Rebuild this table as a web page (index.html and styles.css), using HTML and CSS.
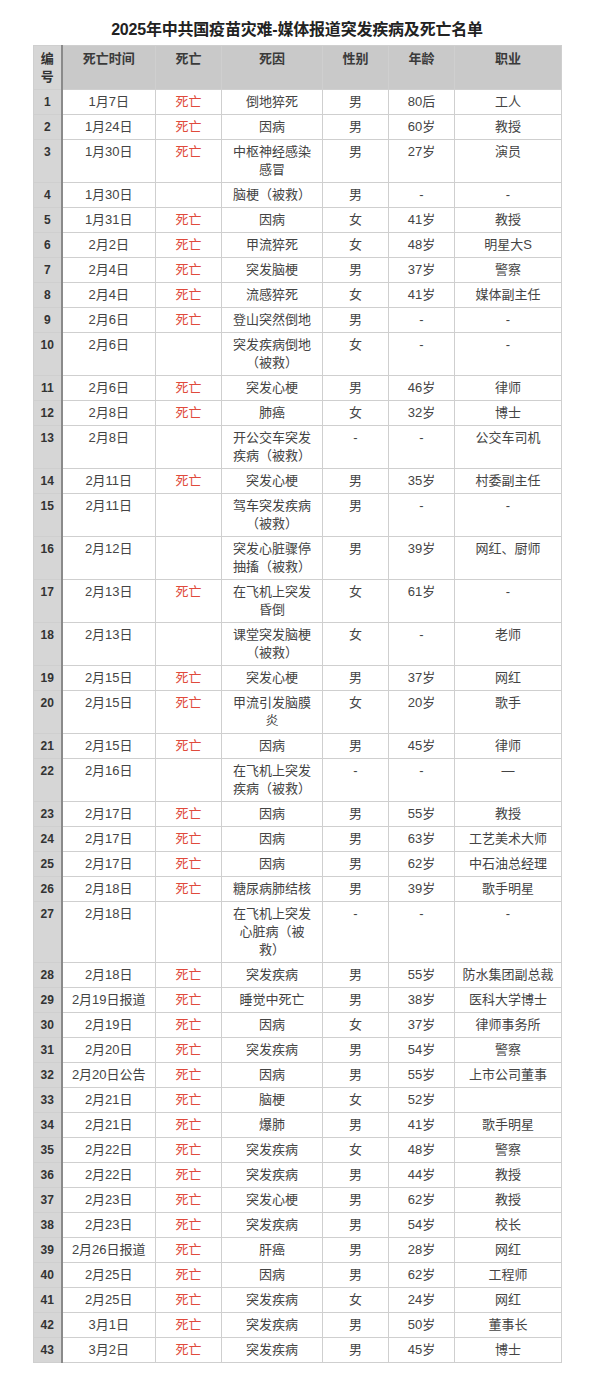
FILE: index.html
```html
<!DOCTYPE html>
<html lang="zh-CN">
<head>
<meta charset="utf-8">
<title>2025年中共国疫苗灾难-媒体报道突发疾病及死亡名单</title>
<link rel="stylesheet" href="styles.css">
</head>
<body>
<div class="sheet">
  <h1 class="title">2025年中共国疫苗灾难-媒体报道突发疾病及死亡名单</h1>
  <table class="list">
    <colgroup>
      <col class="c-no"><col class="c-date"><col class="c-dead"><col class="c-cause"><col class="c-sex"><col class="c-age"><col class="c-job">
    </colgroup>
    <thead>
      <tr><th class="no">编<br>号</th><th>死亡时间</th><th>死亡</th><th>死因</th><th>性别</th><th>年龄</th><th>职业</th></tr>
    </thead>
    <tbody>
      <tr><td class="no">1</td><td>1月7日</td><td class="dead">死亡</td><td>倒地猝死</td><td>男</td><td>80后</td><td>工人</td></tr>
      <tr><td class="no">2</td><td>1月24日</td><td class="dead">死亡</td><td>因病</td><td>男</td><td>60岁</td><td>教授</td></tr>
      <tr><td class="no">3</td><td>1月30日</td><td class="dead">死亡</td><td>中枢神经感染感冒</td><td>男</td><td>27岁</td><td>演员</td></tr>
      <tr><td class="no">4</td><td>1月30日</td><td></td><td>脑梗（被救）</td><td>男</td><td>-</td><td>-</td></tr>
      <tr><td class="no">5</td><td>1月31日</td><td class="dead">死亡</td><td>因病</td><td>女</td><td>41岁</td><td>教授</td></tr>
      <tr><td class="no">6</td><td>2月2日</td><td class="dead">死亡</td><td>甲流猝死</td><td>女</td><td>48岁</td><td>明星大S</td></tr>
      <tr><td class="no">7</td><td>2月4日</td><td class="dead">死亡</td><td>突发脑梗</td><td>男</td><td>37岁</td><td>警察</td></tr>
      <tr><td class="no">8</td><td>2月4日</td><td class="dead">死亡</td><td>流感猝死</td><td>女</td><td>41岁</td><td>媒体副主任</td></tr>
      <tr><td class="no">9</td><td>2月6日</td><td class="dead">死亡</td><td>登山突然倒地</td><td>男</td><td>-</td><td>-</td></tr>
      <tr><td class="no">10</td><td>2月6日</td><td></td><td>突发疾病倒地（被救）</td><td>女</td><td>-</td><td>-</td></tr>
      <tr><td class="no">11</td><td>2月6日</td><td class="dead">死亡</td><td>突发心梗</td><td>男</td><td>46岁</td><td>律师</td></tr>
      <tr><td class="no">12</td><td>2月8日</td><td class="dead">死亡</td><td>肺癌</td><td>女</td><td>32岁</td><td>博士</td></tr>
      <tr><td class="no">13</td><td>2月8日</td><td></td><td>开公交车突发疾病（被救）</td><td>-</td><td>-</td><td>公交车司机</td></tr>
      <tr><td class="no">14</td><td>2月11日</td><td class="dead">死亡</td><td>突发心梗</td><td>男</td><td>35岁</td><td>村委副主任</td></tr>
      <tr><td class="no">15</td><td>2月11日</td><td></td><td>驾车突发疾病（被救）</td><td>男</td><td>-</td><td>-</td></tr>
      <tr><td class="no">16</td><td>2月12日</td><td></td><td>突发心脏骤停抽搐（被救）</td><td>男</td><td>39岁</td><td>网红、厨师</td></tr>
      <tr><td class="no">17</td><td>2月13日</td><td class="dead">死亡</td><td>在飞机上突发昏倒</td><td>女</td><td>61岁</td><td>-</td></tr>
      <tr><td class="no">18</td><td>2月13日</td><td></td><td>课堂突发脑梗（被救）</td><td>女</td><td>-</td><td>老师</td></tr>
      <tr><td class="no">19</td><td>2月15日</td><td class="dead">死亡</td><td>突发心梗</td><td>男</td><td>37岁</td><td>网红</td></tr>
      <tr><td class="no">20</td><td>2月15日</td><td class="dead">死亡</td><td>甲流引发脑膜炎</td><td>女</td><td>20岁</td><td>歌手</td></tr>
      <tr><td class="no">21</td><td>2月15日</td><td class="dead">死亡</td><td>因病</td><td>男</td><td>45岁</td><td>律师</td></tr>
      <tr><td class="no">22</td><td>2月16日</td><td></td><td>在飞机上突发疾病（被救）</td><td>-</td><td>-</td><td>—</td></tr>
      <tr><td class="no">23</td><td>2月17日</td><td class="dead">死亡</td><td>因病</td><td>男</td><td>55岁</td><td>教授</td></tr>
      <tr><td class="no">24</td><td>2月17日</td><td class="dead">死亡</td><td>因病</td><td>男</td><td>63岁</td><td>工艺美术大师</td></tr>
      <tr><td class="no">25</td><td>2月17日</td><td class="dead">死亡</td><td>因病</td><td>男</td><td>62岁</td><td>中石油总经理</td></tr>
      <tr><td class="no">26</td><td>2月18日</td><td class="dead">死亡</td><td>糖尿病肺结核</td><td>男</td><td>39岁</td><td>歌手明星</td></tr>
      <tr><td class="no">27</td><td>2月18日</td><td></td><td>在飞机上突发心脏病（被<br>救）</td><td>-</td><td>-</td><td>-</td></tr>
      <tr><td class="no">28</td><td>2月18日</td><td class="dead">死亡</td><td>突发疾病</td><td>男</td><td>55岁</td><td>防水集团副总裁</td></tr>
      <tr><td class="no">29</td><td>2月19日报道</td><td class="dead">死亡</td><td>睡觉中死亡</td><td>男</td><td>38岁</td><td>医科大学博士</td></tr>
      <tr><td class="no">30</td><td>2月19日</td><td class="dead">死亡</td><td>因病</td><td>女</td><td>37岁</td><td>律师事务所</td></tr>
      <tr><td class="no">31</td><td>2月20日</td><td class="dead">死亡</td><td>突发疾病</td><td>男</td><td>54岁</td><td>警察</td></tr>
      <tr><td class="no">32</td><td>2月20日公告</td><td class="dead">死亡</td><td>因病</td><td>男</td><td>55岁</td><td>上市公司董事</td></tr>
      <tr><td class="no">33</td><td>2月21日</td><td class="dead">死亡</td><td>脑梗</td><td>女</td><td>52岁</td><td></td></tr>
      <tr><td class="no">34</td><td>2月21日</td><td class="dead">死亡</td><td>爆肺</td><td>男</td><td>41岁</td><td>歌手明星</td></tr>
      <tr><td class="no">35</td><td>2月22日</td><td class="dead">死亡</td><td>突发疾病</td><td>女</td><td>48岁</td><td>警察</td></tr>
      <tr><td class="no">36</td><td>2月22日</td><td class="dead">死亡</td><td>突发疾病</td><td>男</td><td>44岁</td><td>教授</td></tr>
      <tr><td class="no">37</td><td>2月23日</td><td class="dead">死亡</td><td>突发心梗</td><td>男</td><td>62岁</td><td>教授</td></tr>
      <tr><td class="no">38</td><td>2月23日</td><td class="dead">死亡</td><td>突发疾病</td><td>男</td><td>54岁</td><td>校长</td></tr>
      <tr><td class="no">39</td><td>2月26日报道</td><td class="dead">死亡</td><td>肝癌</td><td>男</td><td>28岁</td><td>网红</td></tr>
      <tr><td class="no">40</td><td>2月25日</td><td class="dead">死亡</td><td>因病</td><td>男</td><td>62岁</td><td>工程师</td></tr>
      <tr><td class="no">41</td><td>2月25日</td><td class="dead">死亡</td><td>突发疾病</td><td>女</td><td>24岁</td><td>网红</td></tr>
      <tr><td class="no">42</td><td>3月1日</td><td class="dead">死亡</td><td>突发疾病</td><td>男</td><td>50岁</td><td>董事长</td></tr>
      <tr><td class="no">43</td><td>3月2日</td><td class="dead">死亡</td><td>突发疾病</td><td>男</td><td>45岁</td><td>博士</td></tr>
    </tbody>
  </table>
</div>
</body>
</html>
```

FILE: styles.css
```css
html, body {
  margin: 0;
  padding: 0;
  background: #ffffff;
}

body {
  font-family: "Liberation Sans", "Noto Sans CJK SC", sans-serif;
  color: #333333;
}

.sheet {
  width: 528px;
  margin-left: 33px;
  padding-top: 20px;
}

.title {
  margin: 0 0 5px 0;
  font-size: 16px;
  line-height: 20px;
  font-weight: bold;
  text-align: center;
  color: #222222;
  letter-spacing: -0.2px;
}

.list {
  width: 528px;
  table-layout: fixed;
  border-collapse: collapse;
  font-size: 13px;
  line-height: 18px;
}

.c-no { width: 28px; }
.c-date { width: 94px; }
.c-dead { width: 66px; }
.c-cause { width: 101px; }
.c-sex { width: 66px; }
.c-age { width: 66px; }
.c-job { width: 107px; }

.list th,
.list td {
  border: 1px solid #cfcfcf;
  padding: 3px 6px;
  text-align: center;
  vertical-align: top;
  overflow: hidden;
}

.list th {
  background: #c9c9c9;
  font-weight: bold;
  color: #3a3a3a;
  padding-top: 4px;
  padding-bottom: 3px;
}

.list td {
  color: #444444;
  white-space: normal;
}

.list td:nth-child(2),
.list td:nth-child(7) {
  white-space: nowrap;
}

.list .no {
  background: #d6d6d6;
  font-weight: bold;
  color: #333333;
  padding-left: 1px;
  padding-right: 1px;
  border-right: 2px solid #8a8a8a;
  font-size: 12px;
}

.list th.no {
  font-size: 13px;
}

.list .dead {
  color: #e04a3c;
}
```
